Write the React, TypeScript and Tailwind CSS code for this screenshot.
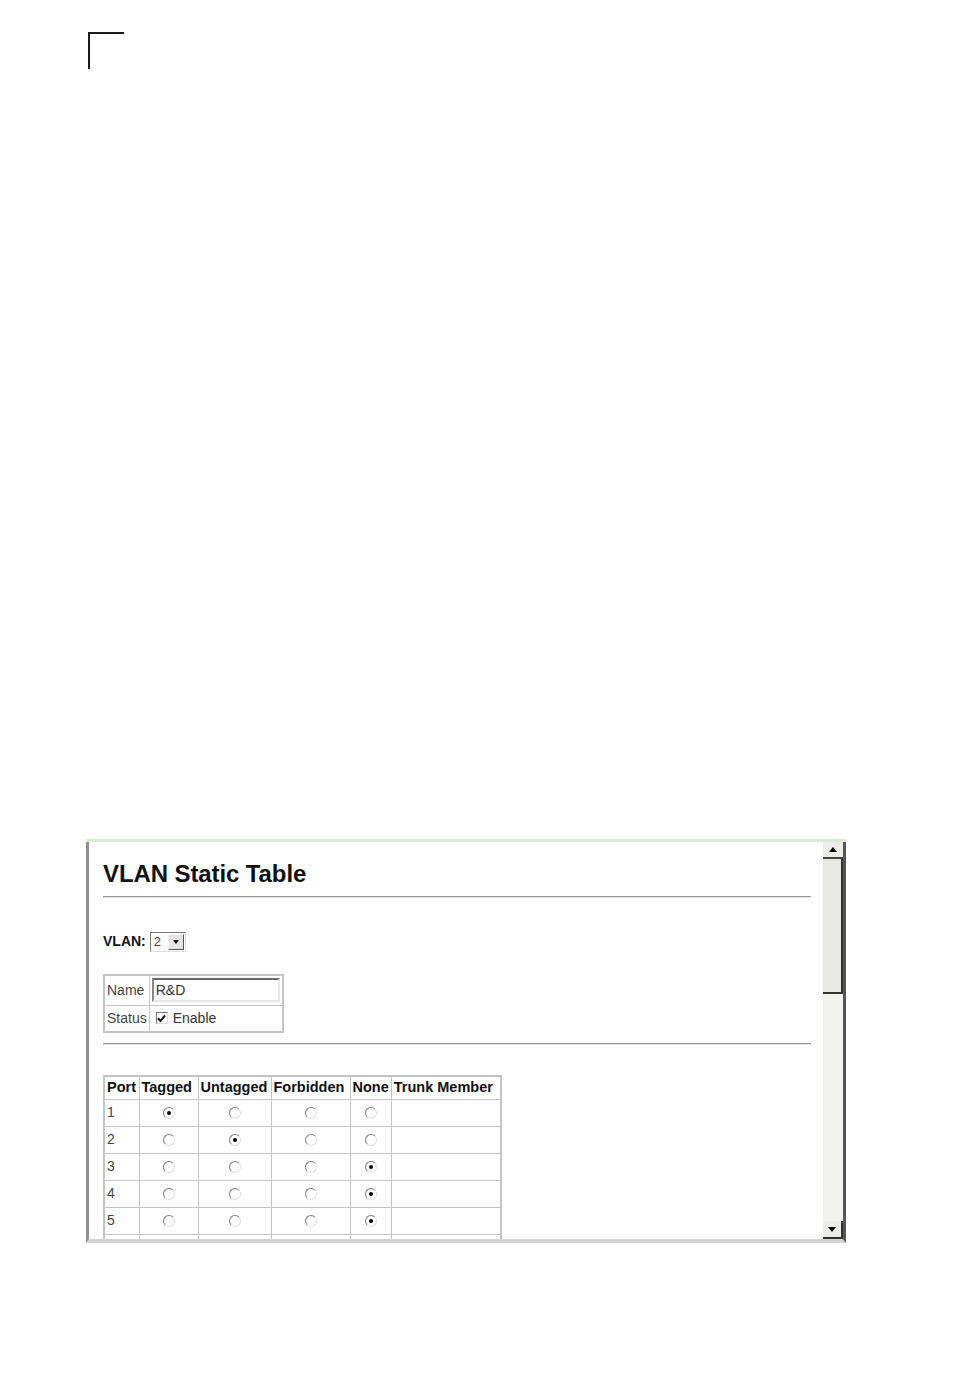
import React from "react";

const rows = [
  { port: "1", sel: 0 },
  { port: "2", sel: 1 },
  { port: "3", sel: 3 },
  { port: "4", sel: 3 },
  { port: "5", sel: 3 },
];

function Radio({ on }: { on: boolean }) {
  return (
    <span className="flex h-[12px] w-[12px] items-center justify-center rounded-full border border-t-[#7a7a7a] border-l-[#7a7a7a] border-r-[#e0e0e0] border-b-[#e0e0e0] bg-white">
      {on && <span className="h-[4px] w-[4px] rounded-full bg-black" />}
    </span>
  );
}

export default function App() {
  return (
    <div className="relative h-[1388px] w-[954px] bg-white font-['Liberation_Sans',Arial,sans-serif] text-black">
      {/* crop mark */}
      <div className="ml-[88px] pt-[32px]">
        <div className="h-[37px] w-[36px] border-l-2 border-t-2 border-[#1a1a1a]" />
      </div>

      {/* browser screenshot */}
      <div className="ml-[86px] mt-[770px] h-[404px] w-[760px] border-t-[3px] border-[#dcebd0] bg-white">
        <div className="flex h-full border-b-[4px] border-l-[3px] border-r-[3px] border-b-[#d4d4d4] border-l-[#8f8f8f] border-r-[#555]">
          <div className="flex-1 overflow-hidden pl-[14px] pr-[12px]">
            <h1 className="mt-[19px] text-[24px] font-bold leading-[26px] tracking-[-0.1px] text-[#111]">
              VLAN Static Table
            </h1>
            <div className="mt-[9px] h-[2px] border-t border-[#999] bg-[#e6e6e6]" />

            <div className="mt-[33px] flex items-center gap-[4px]">
              <span className="text-[14px] font-bold text-[#111]">VLAN:</span>
              <span className="flex h-[20px] w-[36px] items-center border border-t-[#777] border-l-[#777] border-r-[#ddd] border-b-[#ddd] bg-white">
                <span className="pl-[3px] text-[13px] text-[#444]">2</span>
                <span className="ml-auto mr-[1px] flex h-[16px] w-[16px] items-center justify-center border border-t-[#f4f4f4] border-l-[#f4f4f4] border-r-[#555] border-b-[#555] bg-[#e4e4e4]">
                  <span className="h-0 w-0 border-x-[3px] border-t-[4px] border-x-transparent border-t-black" />
                </span>
              </span>
            </div>

            <table className="mt-[22px] border-collapse border-2 border-[#c4c4c4] text-[14px] text-[#444]">
              <tbody>
                <tr className="h-[30px]">
                  <td className="border border-[#c4c4c4] px-[2px]">Name</td>
                  <td className="border border-[#c4c4c4] px-[2px]">
                    <span className="flex h-[24px] w-[128px] items-center border-2 border-t-[#666] border-l-[#888] border-r-[#e8e8e8] border-b-[#e8e8e8] pl-[2px] text-[#333]">
                      R&amp;D
                    </span>
                  </td>
                </tr>
                <tr className="h-[27px]">
                  <td className="border border-[#c4c4c4] px-[2px]">Status</td>
                  <td className="border border-[#c4c4c4] px-[6px]">
                    <span className="flex items-center gap-[5px]">
                      <span className="flex h-[12px] w-[12px] items-center justify-center border border-t-[#777] border-l-[#777] border-r-[#ddd] border-b-[#ddd] bg-white">
                        <svg width="9" height="9" viewBox="0 0 9 9">
                          <path d="M1 4.3 L3.5 7 L8 1.5" stroke="#111" strokeWidth="2" fill="none" />
                        </svg>
                      </span>
                      <span className="text-[#333]">Enable</span>
                    </span>
                  </td>
                </tr>
              </tbody>
            </table>

            <div className="mt-[10px] h-[2px] border-t border-[#999] bg-[#e6e6e6]" />

            <table className="mt-[30px] border-collapse border-2 border-[#c4c4c4] text-[14px] text-[#444]">
              <thead>
                <tr className="h-[22px] text-left text-[14.5px] font-bold text-[#111]">
                  <th className="w-[35px] border border-[#c4c4c4] px-[2px]">Port</th>
                  <th className="w-[59px] border border-[#c4c4c4] px-[2px]">Tagged</th>
                  <th className="w-[73px] border border-[#c4c4c4] px-[2px]">Untagged</th>
                  <th className="w-[79px] border border-[#c4c4c4] px-[2px]">Forbidden</th>
                  <th className="w-[41px] border border-[#c4c4c4] px-[2px]">None</th>
                  <th className="w-[110px] border border-[#c4c4c4] px-[2px]">Trunk Member</th>
                </tr>
              </thead>
              <tbody>
                {rows.map((r) => (
                  <tr key={r.port} className="h-[27px]">
                    <td className="border border-[#c4c4c4] px-[2px] align-middle">{r.port}</td>
                    {[0, 1, 2, 3].map((i) => (
                      <td key={i} className="border border-[#c4c4c4] align-middle">
                        <div className="flex justify-center">
                          <Radio on={r.sel === i} />
                        </div>
                      </td>
                    ))}
                    <td className="border border-[#c4c4c4]" />
                  </tr>
                ))}
                {/* next row, scrolled out of view */}
                <tr className="h-[27px]">
                  {[0, 1, 2, 3, 4, 5].map((i) => (
                    <td key={i} className="border border-[#c4c4c4]" />
                  ))}
                </tr>
              </tbody>
            </table>
          </div>

          {/* scrollbar */}
          <div className="flex w-[20px] flex-col bg-[#f1f1ee]">
            <div className="flex h-[17px] items-center justify-center border-b-2 border-[#444] bg-[#ecece8]">
              <span className="h-0 w-0 border-x-[4px] border-b-[5px] border-x-transparent border-b-black" />
            </div>
            <div className="h-[135px] border-b-2 border-r-2 border-[#333] bg-[#e7e7e3]" />
            <div className="flex-1" />
            <div className="flex h-[18px] items-center justify-center border-b-2 border-r-2 border-[#333] bg-[#ecece8]">
              <span className="h-0 w-0 border-x-[4px] border-t-[5px] border-x-transparent border-t-black" />
            </div>
          </div>
        </div>
      </div>
    </div>
  );
}
